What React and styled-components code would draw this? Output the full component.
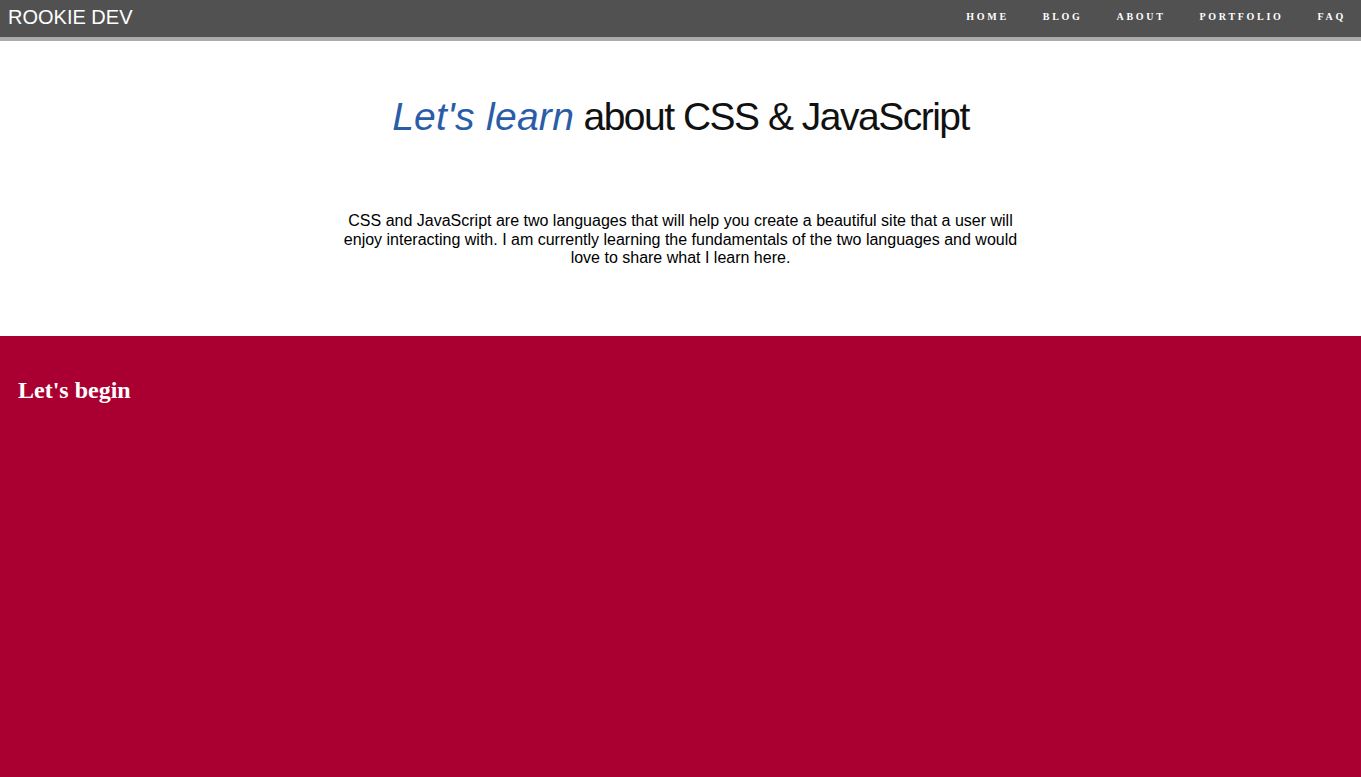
import React from "react";
import styled, { createGlobalStyle } from "styled-components";

const GlobalStyle = createGlobalStyle`
  html, body {
    margin: 0;
    padding: 0;
    background: #fff;
  }
  #root {
    min-height: 100vh;
    display: flex;
    flex-direction: column;
  }
`;

const navLinks = ["Home", "Blog", "About", "Portfolio", "FAQ"];

const App = () => {
  return (
    <>
      <GlobalStyle />
      <Header>
        <Logo>ROOKIE DEV</Logo>
        <Nav>
          {navLinks.map((link) => (
            <NavLink key={link} href="#">
              {link}
            </NavLink>
          ))}
        </Nav>
      </Header>

      <Intro>
        <Title>
          <span>Let's learn</span> about CSS &amp; JavaScript
        </Title>
        <Lead>
          CSS and JavaScript are two languages that will help you create a
          beautiful site that a user will enjoy interacting with. I am
          currently learning the fundamentals of the two languages and would
          love to share what I learn here.
        </Lead>
      </Intro>

      <Begin>
        <h2>Let's begin</h2>
      </Begin>
    </>
  );
};

const Header = styled.header`
  display: flex;
  align-items: center;
  justify-content: space-between;
  height: 37px;
  padding: 0 15px 0 8px;
  background: #515151;
  border-bottom: 4px solid #ababab;
`;

const Logo = styled.h1`
  margin: 0 0 2px;
  color: #fff;
  font-family: "Liberation Sans", Arial, sans-serif;
  font-size: 20px;
  font-weight: normal;
`;

const Nav = styled.nav`
  display: flex;
  gap: 34px;
  padding-bottom: 4px;
`;

const NavLink = styled.a`
  color: #fff;
  text-decoration: none;
  text-transform: uppercase;
  font-family: "Liberation Serif", "Times New Roman", serif;
  font-weight: bold;
  font-size: 10px;
  letter-spacing: 2.7px;
`;

const Intro = styled.section`
  padding: 54px 0 68px;
  text-align: center;
  font-family: "Liberation Sans", Arial, sans-serif;
`;

const Title = styled.h2`
  margin: 0 0 73px;
  font-size: 39px;
  font-weight: normal;
  letter-spacing: -1.5px;
  color: #111;
  span {
    color: #2a5ca8;
    font-style: italic;
    letter-spacing: 0.3px;
  }
`;

const Lead = styled.p`
  width: 680px;
  margin: 0 auto;
  font-size: 16px;
  line-height: 18.5px;
  color: #000;
`;

const Begin = styled.section`
  flex: 1;
  background: #aa0031;
  padding: 29px 18px;
  h2 {
    margin: 12px 0 0;
    color: #fff;
    font-family: "Liberation Serif", "Times New Roman", serif;
    font-size: 24px;
    font-weight: bold;
  }
`;

export default App;
